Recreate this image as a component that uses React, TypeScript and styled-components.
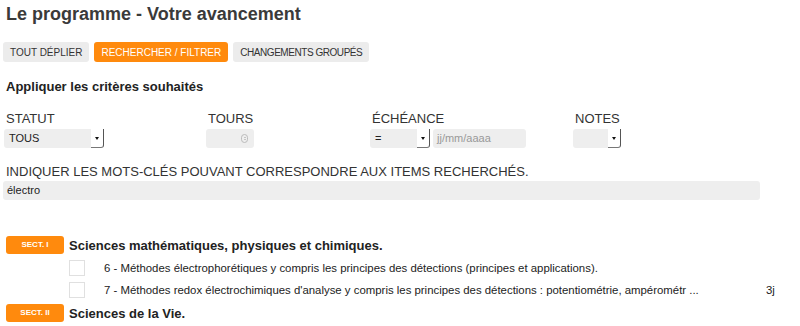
import React from 'react';
import styled, { createGlobalStyle } from 'styled-components';

const GlobalStyle = createGlobalStyle`
  body {
    margin: 0;
    background: #fff;
    font-family: "Liberation Sans", Arial, sans-serif;
    color: #333;
  }
`;

const Page = styled.div`
  width: 800px;
  height: 326px;
  overflow: hidden;
  padding: 0 0 0 4px;
  box-sizing: border-box;
`;

const Title = styled.h1`
  margin: 0;
  padding: 3px 0 0 2px;
  font-size: 18px;
  line-height: 22px;
  font-weight: bold;
  color: #3a3a3a;
`;

const Toolbar = styled.div`
  display: flex;
  gap: 5px;
  margin-top: 17px;
  margin-left: -1px;
`;

const TabButton = styled.button<{ $active?: boolean; $tight?: boolean }>`
  height: 20px;
  padding: 0 7px;
  border: none;
  border-radius: 3px;
  font-family: inherit;
  font-size: 10px;
  letter-spacing: ${(p) => (p.$tight ? '-0.45px' : '0')};
  text-transform: uppercase;
  background: ${(p) => (p.$active ? '#ff8a0d' : '#ececec')};
  color: ${(p) => (p.$active ? '#fff' : '#333')};
  cursor: pointer;
`;

const SubTitle = styled.h2`
  margin: 17px 0 0 2px;
  font-size: 13px;
  line-height: 16px;
  font-weight: bold;
  color: #222;
`;

const FilterGrid = styled.div`
  display: grid;
  grid-template-columns: 202px 164px 203px auto;
  margin-top: 16px;
`;

const Field = styled.div`
  display: flex;
  flex-direction: column;
`;

const Label = styled.label`
  font-size: 13px;
  line-height: 16px;
  padding-left: 2px;
  color: #333;
  text-transform: uppercase;
`;

const Controls = styled.div`
  display: flex;
  gap: 3px;
  margin-top: 2px;
`;

const SelectBox = styled.div<{ $width: number }>`
  display: flex;
  align-items: stretch;
  width: ${(p) => p.$width}px;
  height: 19px;
`;

const SelectValue = styled.div`
  flex: 1;
  background: #eeeeee;
  border-radius: 3px 0 0 3px;
  font-size: 11px;
  line-height: 19px;
  padding-left: 5px;
  color: #222;
`;

const SelectArrow = styled.div`
  width: 12px;
  border-right: 1.5px solid #555;
  border-bottom: 1px solid #777;
  border-bottom-right-radius: 3px;
  display: flex;
  align-items: center;
  justify-content: center;
  background: #fff;
  &::after {
    content: '';
    border-left: 2.5px solid transparent;
    border-right: 2.5px solid transparent;
    border-top: 3px solid #111;
  }
`;

const TextInput = styled.div<{ $width: number }>`
  width: ${(p) => p.$width}px;
  height: 19px;
  background: #eeeeee;
  border-radius: 3px;
  font-size: 11px;
  line-height: 19px;
  padding-left: 4px;
  box-sizing: border-box;
  color: #222;
  position: relative;
`;

const Placeholder = styled.span`
  color: #999;
`;

const Spinner = styled.span`
  position: absolute;
  right: 6px;
  top: 5px;
  width: 7px;
  height: 9px;
  border: 1px solid #bbb;
  border-radius: 4px;
  box-sizing: border-box;
  display: flex;
  flex-direction: column;
  align-items: center;
  justify-content: space-evenly;
  &::before,
  &::after {
    content: '';
    border-left: 1.5px solid transparent;
    border-right: 1.5px solid transparent;
  }
  &::before {
    border-bottom: 1.5px solid #999;
  }
  &::after {
    border-top: 1.5px solid #999;
  }
`;

const KeywordBlock = styled.div`
  margin-top: 16px;
  display: flex;
  flex-direction: column;
`;

const KeywordInput = styled(TextInput)`
  width: 757px;
  margin-top: 1px;
  margin-left: -1px;
`;

const SectionList = styled.div`
  margin-top: 36px;
  display: flex;
  flex-direction: column;
`;

const SectionHeader = styled.div`
  display: flex;
  align-items: center;
  gap: 5px;
  height: 18px;
  margin-left: 2px;
`;

const Badge = styled.span`
  width: 58px;
  height: 18px;
  border-radius: 3px;
  background: #ff8a0d;
  color: #fff;
  font-size: 8px;
  font-weight: bold;
  line-height: 18px;
  text-align: center;
`;

const SectionTitle = styled.span`
  font-size: 13px;
  font-weight: bold;
  color: #222;
`;

const ItemList = styled.div`
  display: flex;
  flex-direction: column;
  gap: 6px;
  padding: 6px 0 6px 65px;
`;

const ItemRow = styled.div`
  display: grid;
  grid-template-columns: 16px 1fr 30px;
  column-gap: 19px;
  align-items: center;
  height: 16px;
`;

const Checkbox = styled.span`
  width: 16px;
  height: 16px;
  border: 1px solid #e0e0e0;
  box-sizing: border-box;
  background: #fff;
`;

const ItemText = styled.span`
  font-size: 11.4px;
  color: #222;
  white-space: nowrap;
`;

const Duration = styled.span`
  font-size: 11.4px;
  color: #222;
  margin-left: -4px;
`;

const Select = ({ width, value }: { width: number; value?: string }) => (
  <SelectBox $width={width}>
    <SelectValue>{value}</SelectValue>
    <SelectArrow />
  </SelectBox>
);

const items = [
  {
    text: '6 - Méthodes électrophorétiques y compris les principes des détections (principes et applications).',
    duration: '',
  },
  {
    text: "7 - Méthodes redox électrochimiques d'analyse y compris les principes des détections : potentiométrie, ampérométr ...",
    duration: '3j',
  },
];

export default function App() {
  return (
    <Page>
      <GlobalStyle />
      <Title>Le programme - Votre avancement</Title>
      <Toolbar>
        <TabButton>Tout déplier</TabButton>
        <TabButton $active>Rechercher / filtrer</TabButton>
        <TabButton $tight>Changements groupés</TabButton>
      </Toolbar>
      <SubTitle>Appliquer les critères souhaités</SubTitle>
      <FilterGrid>
        <Field>
          <Label>Statut</Label>
          <Controls>
            <Select width={100} value="TOUS" />
          </Controls>
        </Field>
        <Field>
          <Label>Tours</Label>
          <Controls>
            <TextInput $width={48}>
              <Spinner />
            </TextInput>
          </Controls>
        </Field>
        <Field>
          <Label>Échéance</Label>
          <Controls>
            <Select width={60} value="=" />
            <TextInput $width={93}>
              <Placeholder>jj/mm/aaaa</Placeholder>
            </TextInput>
          </Controls>
        </Field>
        <Field>
          <Label>Notes</Label>
          <Controls>
            <Select width={48} />
          </Controls>
        </Field>
      </FilterGrid>
      <KeywordBlock>
        <Label>Indiquer les mots-clés pouvant correspondre aux items recherchés.</Label>
        <KeywordInput $width={757}>électro</KeywordInput>
      </KeywordBlock>
      <SectionList>
        <SectionHeader>
          <Badge>SECT. I</Badge>
          <SectionTitle>Sciences mathématiques, physiques et chimiques.</SectionTitle>
        </SectionHeader>
        <ItemList>
          {items.map((it) => (
            <ItemRow key={it.text}>
              <Checkbox />
              <ItemText>{it.text}</ItemText>
              <Duration>{it.duration}</Duration>
            </ItemRow>
          ))}
        </ItemList>
        <SectionHeader>
          <Badge>SECT. II</Badge>
          <SectionTitle>Sciences de la Vie.</SectionTitle>
        </SectionHeader>
      </SectionList>
    </Page>
  );
}
